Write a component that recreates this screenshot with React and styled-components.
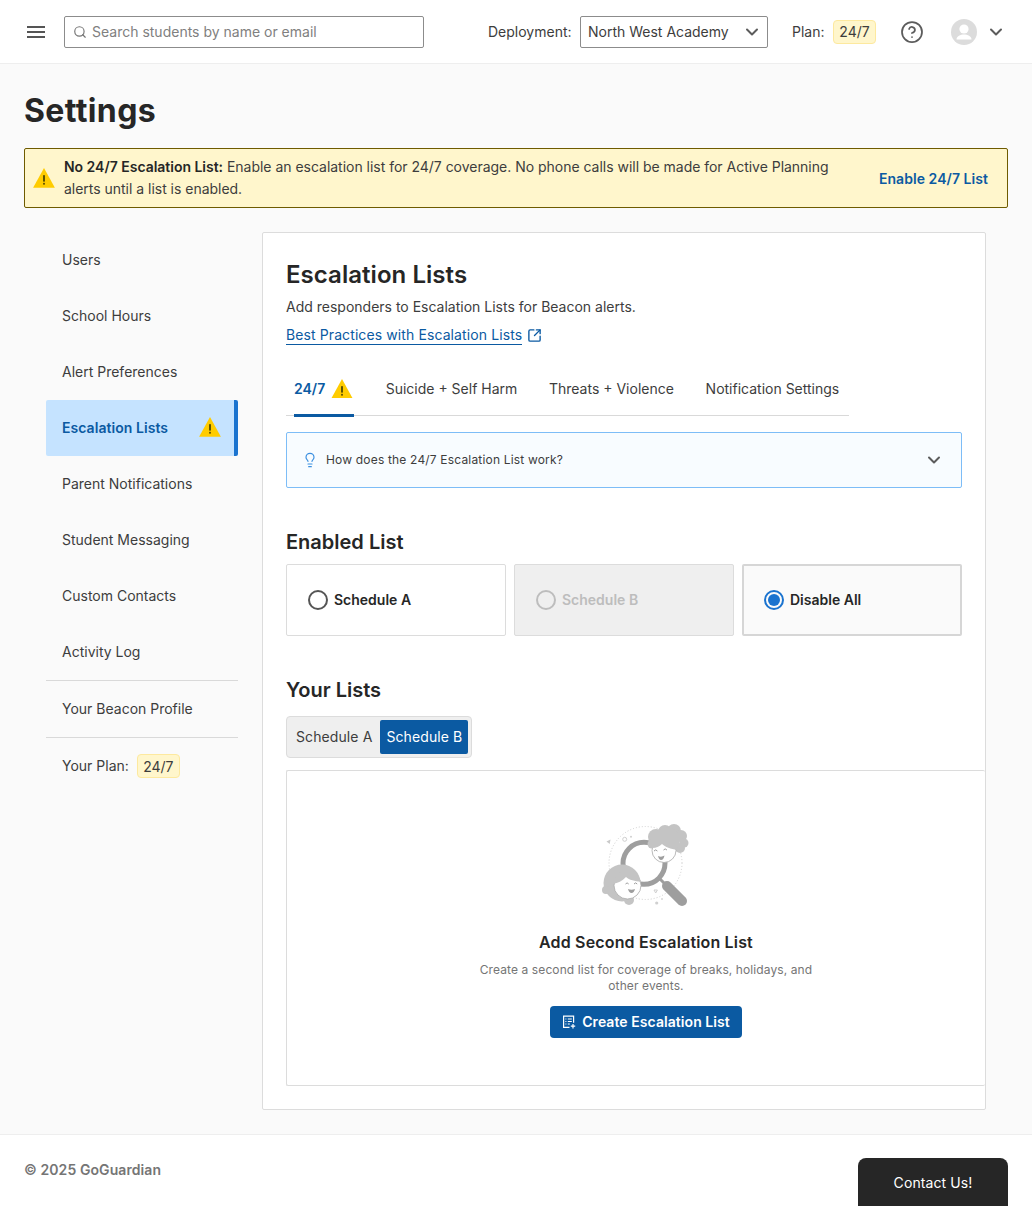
import React from "react";
import styled, { createGlobalStyle } from "styled-components";
import { ChevronDown, CircleHelp, Lightbulb, Search, SquareArrowOutUpRight } from "lucide-react";

const Global = createGlobalStyle`
  html, body { margin: 0; padding: 0; background: #fafafa; }
  * { box-sizing: border-box; }
  body { font-family: Inter, "Noto Sans", sans-serif; color: #262626; font-size: 14px; letter-spacing: 0; }
`;

const Page = styled.div`
  width: 1032px;
  height: 1206px;
  display: flex;
  flex-direction: column;
  overflow: hidden;
`;

const Header = styled.header`
  height: 64px;
  flex: none;
  background: #fff;
  border-bottom: 1px solid #eeeeee;
  display: flex;
  align-items: center;
  padding: 0 24px 0 27px;
`;
const MenuButton = styled.div`
  width: 18px;
  height: 12px;
  margin-right: 19px;
  display: flex;
  color: #555;
`;
const SearchBox = styled.div`
  width: 360px;
  height: 32px;
  flex: none;
  border: 1px solid #8c8c8c;
  border-radius: 2px;
  background: #fff;
  display: flex;
  align-items: center;
  gap: 5px;
  padding-left: 8px;
  color: #808080;
  margin-right: 64px;
`;
const Label = styled.span`
  width: ${(p) => p.$width}px;
  flex: none;
  color: #3d3d3d;
  white-space: nowrap;
`;
const DeploySelect = styled.div`
  width: 188px;
  height: 32px;
  flex: none;
  margin-left: 8px;
  margin-right: 24px;
  border: 1px solid #8c8c8c;
  border-radius: 2px;
  background: #fff;
  display: flex;
  align-items: center;
  justify-content: space-between;
  padding: 0 5px 0 7px;
  color: #3d3d3d;
`;
const Badge = styled.span`
  display: inline-flex;
  align-items: center;
  justify-content: center;
  width: 43px;
  height: 24px;
  flex: none;
  margin-left: 8px;
  background: #fff6cc;
  border: 1px solid #fde99f;
  border-radius: 4px;
  color: #3d3d3d;
  font-weight: 400;
`;
const NavBadge = styled(Badge)`
  margin-top: 2px;
`;
const HelpSlot = styled.div`
  display: flex;
  color: #5c5c5c;
  margin-left: 24px;
  margin-right: 27px;
`;
const AvatarSlot = styled.div`
  display: flex;
  align-items: center;
  gap: 9px;
  color: #5c5c5c;
`;

const Main = styled.main`
  flex: 1;
  display: flex;
  flex-direction: column;
  padding: 0 24px;
`;
const Title = styled.h1`
  margin: 26px 0 0;
  font-size: 32px;
  line-height: 42px;
  font-weight: 700;
  letter-spacing: 0.37px;
  color: #262626;
`;
const Banner = styled.div`
  margin-top: 16px;
  height: 60px;
  width: 984px;
  flex: none;
  background: #fff6cc;
  border: 1px solid #6e5b00;
  border-radius: 2px;
  display: flex;
  align-items: center;
  padding: 0 19px 0 8px;
`;
const BannerText = styled.div`
  margin-left: 9px;
  line-height: 22px;
  color: #3d3d3d;
  width: 785px;
  letter-spacing: -0.02px;
  b { font-weight: 600; color: #262626; }
`;
const BannerAction = styled.a`
  margin-left: auto;
  color: #0b5aa2;
  font-weight: 600;
  letter-spacing: 0.05px;
`;
const Columns = styled.div`
  display: flex;
  margin-top: 24px;
  padding-left: 22px;
`;
const Sidebar = styled.nav`
  width: 192px;
  flex: none;
  margin-right: 24px;
  display: flex;
  flex-direction: column;
`;
const NavItem = styled.div`
  height: 56px;
  display: flex;
  align-items: center;
  justify-content: space-between;
  padding: 0 13px 2px 16px;
  color: ${(p) => (p.$active ? "#0b5aa2" : "#3d3d3d")};
  font-weight: ${(p) => (p.$active ? 600 : 400)};
  letter-spacing: ${(p) => (p.$active ? "0.05px" : "0")};
  background: ${(p) => (p.$active ? "#c5e3ff" : "transparent")};
  border-right: ${(p) => (p.$active ? "4px solid #1a73cf" : "none")};
  border-radius: ${(p) => (p.$active ? "2px" : "0")};
`;
const NavDivided = styled(NavItem)`
  height: 57px;
  border-top: 1px solid #d9d9d9;
  justify-content: flex-start;
`;
const Card = styled.section`
  width: 724px;
  height: 878px;
  background: #fff;
  border: 1px solid #dcdcdc;
  border-radius: 2px;
  padding: 24px 23px 0;
  display: flex;
  flex-direction: column;
`;
const CardTitle = styled.h2`
  margin: 0;
  font-size: 24px;
  line-height: 36px;
  font-weight: 600;
  letter-spacing: 0.05px;
  color: #262626;
`;
const Desc = styled.p`
  margin: 3px 0 0;
  line-height: 22px;
  color: #3d3d3d;
`;
const BestLink = styled.a`
  margin-top: 6px;
  height: 22px;
  display: flex;
  align-items: center;
  gap: 5px;
  color: #0b5aa2;
  letter-spacing: 0.1px;
  span {
    border-bottom: 1px solid #0b5aa2;
    line-height: 18px;
  }
`;
const Tabs = styled.div`
  margin-top: 18px;
  width: 563px;
  height: 52px;
  flex: none;
  border-bottom: 1px solid #d9d9d9;
  display: flex;
  gap: 31.7px;
  padding: 0 8px;
`;
const Tab = styled.div`
  height: 53px;
  min-width: ${(p) => (p.$active ? "60px" : "0")};
  display: flex;
  align-items: center;
  gap: 6px;
  padding-bottom: 1px;
  color: ${(p) => (p.$active ? "#0b5aa2" : "#3d3d3d")};
  font-weight: ${(p) => (p.$active ? 600 : 400)};
  border-bottom: 3px solid ${(p) => (p.$active ? "#0b5aa2" : "transparent")};
  white-space: nowrap;
`;
const Accordion = styled.div`
  margin-top: 16px;
  height: 56px;
  flex: none;
  border: 1px solid #7dbdf7;
  border-radius: 2px;
  background: #f8fcff;
  display: flex;
  align-items: center;
  padding: 0 17px 0 15px;
  color: #3d3d3d;
  font-size: 12px;
  letter-spacing: 0.18px;
  gap: 8px;
  svg:first-child { color: #3b8fe0; }
  svg:last-child { margin-left: auto; color: #5c5c5c; }
`;
const AccordionLabel = styled.span`
  padding-bottom: 2px;
`;
const SectionTitle = styled.h3`
  margin: 40px 0 0;
  font-size: 20px;
  line-height: 28px;
  font-weight: 600;
  letter-spacing: 0;
  color: #262626;
`;
const RadioRow = styled.div`
  margin-top: 8px;
  display: flex;
  gap: 8px;
`;
const RadioCard = styled.div`
  width: 220px;
  height: 72px;
  display: flex;
  align-items: center;
  gap: 6px;
  padding: 0 0 1px ${(p) => (p.$selected ? "20px" : "21px")};
  border: ${(p) => (p.$selected ? "2px solid #d6d6d6" : "1px solid #dcdcdc")};
  border-radius: 2px;
  background: ${(p) => (p.$disabled ? "#efefef" : p.$selected ? "#fafafa" : "#fff")};
  color: ${(p) => (p.$disabled ? "#bdbdbd" : "#262626")};
  font-weight: 600;
`;
const RadioDot = styled.span`
  width: 20px;
  height: 20px;
  flex: none;
  border-radius: 50%;
  border: 2px solid ${(p) => (p.$disabled ? "#bdbdbd" : p.$selected ? "#1a73cf" : "#555")};
  display: flex;
  align-items: center;
  justify-content: center;
  &::after {
    content: "";
    display: ${(p) => (p.$selected ? "block" : "none")};
    width: 12px;
    height: 12px;
    border-radius: 50%;
    background: #1a73cf;
  }
`;
const Segmented = styled.div`
  margin-top: 12px;
  width: 186px;
  height: 42px;
  flex: none;
  display: flex;
  gap: 2px;
  padding: 3px;
  background: #efefef;
  border: 1px solid #dcdcdc;
  border-radius: 4px;
`;
const Segment = styled.div`
  padding: 0 6px 1px;
  display: flex;
  align-items: center;
  border-radius: 2px;
  white-space: nowrap;
  letter-spacing: 0.1px;
  color: ${(p) => (p.$active ? "#fff" : "#3d3d3d")};
  background: ${(p) => (p.$active ? "#0b5aa2" : "transparent")};
`;
const EmptyBox = styled.div`
  margin-top: 12px;
  margin-right: -23px;
  height: 316px;
  flex: none;
  border: 1px solid #dcdcdc;
  border-right: none;
  border-radius: 2px;
  display: flex;
  flex-direction: column;
  align-items: center;
  padding: 53px 0 0 20px;
`;
const EmptyTitle = styled.h4`
  margin: 22px 0 0;
  font-size: 16px;
  line-height: 24px;
  font-weight: 600;
  letter-spacing: 0.16px;
  color: #262626;
`;
const EmptyText = styled.p`
  margin: 8px 0 0;
  width: 350px;
  text-align: center;
  font-size: 12px;
  line-height: 16px;
  letter-spacing: 0.1px;
  color: #757575;
`;
const PrimaryButton = styled.button`
  margin-top: 12px;
  width: 192px;
  height: 32px;
  padding: 0 0 1px;
  border: none;
  border-radius: 4px;
  background: #0b5aa2;
  color: #fff;
  font: 600 14px Inter, sans-serif;
  letter-spacing: 0.06px;
  display: flex;
  align-items: center;
  justify-content: center;
  gap: 6px;
`;
const Footer = styled.footer`
  height: 72px;
  flex: none;
  background: #fff;
  border-top: 1px solid #eeeeee;
  display: flex;
  justify-content: space-between;
  padding: 23px 24px 0;
`;
const Copyright = styled.span`
  margin-top: 1px;
  font-weight: 600;
  color: #757575;
  line-height: 22px;
  letter-spacing: 0.08px;
`;
const ContactButton = styled.div`
  width: 150px;
  height: 48px;
  background: #262626;
  color: #fff;
  border-radius: 8px 8px 0 0;
  display: flex;
  align-items: center;
  justify-content: center;
  letter-spacing: 0.1px;
`;

const WarnIcon = ({ size = 22 }) => (
  <svg width={size} height={size * 0.9} viewBox="0 0 22 20">
    <path d="M11 0 L22 20 L0 20 Z" fill="#ffcc00" />
    <rect x="10" y="7" width="2" height="7" rx="0.8" fill="#5e5200" />
    <rect x="10" y="15" width="2" height="2" rx="0.8" fill="#5e5200" />
  </svg>
);

const MenuIcon = () => (
  <svg width="18" height="12" viewBox="0 0 18 12" fill="currentColor">
    <rect y="0" width="18" height="2" />
    <rect y="5" width="18" height="2" />
    <rect y="10" width="18" height="2" />
  </svg>
);

const AvatarIcon = () => (
  <svg width="26" height="26" viewBox="0 0 26 26">
    <circle cx="13" cy="13" r="13" fill="#dcdcdc" />
    <circle cx="13" cy="10" r="4.6" fill="#fff" />
    <path d="M5.5 20.5c0-3.2 4-5 7.500-5s7.500 1.800 7.500 5z" fill="#fff" />
  </svg>
);

const ListPlusIcon = () => (
  <svg width="14" height="14" viewBox="0 0 14 14" fill="none" stroke="#fff" strokeWidth="1.2">
    <path d="M7.500 12.400H1.600V1.200h10v6.500" />
    <path d="M3.400 4h1M3.400 6.500h1M3.400 9h1M5.800 4h4M5.800 6.500h4M5.800 9h2" />
    <path d="M11 9v4.400M8.800 11.200h4.400" />
  </svg>
);

const Illustration = () => (
  <svg width="90" height="84" viewBox="0 0 90 84">
    <circle cx="44.500" cy="39" r="36.500" fill="none" stroke="#d0d0d0" strokeWidth="1" strokeDasharray="1 2" />
    <path d="M5.500 17.500l4-2-.8 4.400z" fill="#c9c9c9" />
    <circle cx="23.700" cy="15.300" r="2" fill="none" stroke="#d0d0d0" />
    <circle cx="30" cy="12.700" r="1" fill="#d0d0d0" />
    <circle cx="55.700" cy="79" r="1.600" fill="#d0d0d0" />
    <circle cx="61" cy="75" r="1" fill="#d8d8d8" />
    <path d="M53 66l3.400 0-1.700 3z" fill="none" stroke="#d0d0d0" />
    <circle cx="43" cy="39.300" r="21" fill="none" stroke="#9e9e9e" strokeWidth="5" />
    <path d="M59 55l5 5" stroke="#9e9e9e" strokeWidth="3" />
    <path d="M66 62l15 15" stroke="#9e9e9e" strokeWidth="10" strokeLinecap="round" />
    <g fill="#c4c4c4">
      <circle cx="55" cy="13" r="8" />
      <circle cx="64" cy="8" r="7" />
      <circle cx="73" cy="7" r="7" />
      <circle cx="80" cy="12" r="6" />
      <circle cx="83" cy="19" r="4.500" />
      <circle cx="79" cy="24" r="5" />
      <circle cx="51" cy="20" r="4.500" />
      <circle cx="66" cy="16" r="13" />
    </g>
    <circle cx="63" cy="26.500" r="12" fill="#fff" stroke="#a8a8a8" strokeWidth="0.8" />
    <path d="M50 24c4 .5 8-1 11-4 3 3 9 5 15 6l3-14H50z" fill="#c4c4c4" />
    <path d="M53 27q1.700-2.200 3.400 0M62.500 26q1.700-2.200 3.400 0" fill="none" stroke="#9e9e9e" />
    <path d="M57 32q3.500 1.500 6.500-.5-1 4.500-3.500 4.500-2 0-3-4z" fill="#9e9e9e" />
    <g fill="#c4c4c4">
      <circle cx="21" cy="59" r="18.500" />
      <circle cx="5" cy="66" r="4" />
      <circle cx="28" cy="76" r="5" />
    </g>
    <circle cx="26.500" cy="61.500" r="13.500" fill="#fff" stroke="#a8a8a8" strokeWidth="0.8" />
    <path d="M12 60c5-1 9-3 13-7 3 3 9 4 15 5-2-8-8-13-16-12-5 1-11 6-12 14z" fill="#c4c4c4" />
    <path d="M24.500 60q1.600-2.200 3.200 0M33 60q1.600-2.200 3.200 0" fill="none" stroke="#9e9e9e" />
    <path d="M27 65q3.500 1.500 7 0-1 4-3.500 4-2.500 0-3.500-4z" fill="#9e9e9e" />
  </svg>
);

const navItems = [
  { label: "Users" },
  { label: "School Hours" },
  { label: "Alert Preferences" },
  { label: "Escalation Lists", active: true },
  { label: "Parent Notifications" },
  { label: "Student Messaging" },
  { label: "Custom Contacts" },
  { label: "Activity Log" },
];

const tabs = ["Suicide + Self Harm", "Threats + Violence", "Notification Settings"];

const Chevron = () => <ChevronDown size={20} strokeWidth={2.4} />;

export default function App() {
  return (
    <Page>
      <Global />
      <Header>
        <MenuButton><MenuIcon /></MenuButton>
        <SearchBox>
          <Search size={14} strokeWidth={2} color="#757575" />
          Search students by name or email
        </SearchBox>
        <Label $width={84}>Deployment:</Label>
        <DeploySelect>
          North West Academy
          <ChevronDown size={20} strokeWidth={2.4} color="#5c5c5c" />
        </DeploySelect>
        <Label $width={33}>Plan:</Label>
        <Badge>24/7</Badge>
        <HelpSlot><CircleHelp size={24} strokeWidth={1.75} /></HelpSlot>
        <AvatarSlot>
          <AvatarIcon />
          <Chevron />
        </AvatarSlot>
      </Header>
      <Main>
        <Title>Settings</Title>
        <Banner>
          <WarnIcon />
          <BannerText>
            <b>No 24/7 Escalation List:</b> Enable an escalation list for 24/7 coverage. No phone calls will be made for Active Planning alerts until a list is enabled.
          </BannerText>
          <BannerAction>Enable 24/7 List</BannerAction>
        </Banner>
        <Columns>
          <Sidebar>
            {navItems.map((n) => (
              <NavItem key={n.label} $active={n.active}>
                {n.label}
                {n.active && <WarnIcon />}
              </NavItem>
            ))}
            <NavDivided>Your Beacon Profile</NavDivided>
            <NavDivided>Your Plan:<NavBadge>24/7</NavBadge></NavDivided>
          </Sidebar>
          <Card>
            <CardTitle>Escalation Lists</CardTitle>
            <Desc>Add responders to Escalation Lists for Beacon alerts.</Desc>
            <BestLink>
              <span>Best Practices with Escalation Lists</span>
              <SquareArrowOutUpRight size={15} strokeWidth={2.2} />
            </BestLink>
            <Tabs>
              <Tab $active>24/7 <WarnIcon /></Tab>
              {tabs.map((t) => <Tab key={t}>{t}</Tab>)}
            </Tabs>
            <Accordion>
              <Lightbulb size={16} strokeWidth={1.75} />
              <AccordionLabel>How does the 24/7 Escalation List work?</AccordionLabel>
              <Chevron />
            </Accordion>
            <SectionTitle>Enabled List</SectionTitle>
            <RadioRow>
              <RadioCard><RadioDot />Schedule A</RadioCard>
              <RadioCard $disabled><RadioDot $disabled />Schedule B</RadioCard>
              <RadioCard $selected><RadioDot $selected />Disable All</RadioCard>
            </RadioRow>
            <SectionTitle>Your Lists</SectionTitle>
            <Segmented>
              <Segment>Schedule A</Segment>
              <Segment $active>Schedule B</Segment>
            </Segmented>
            <EmptyBox>
              <Illustration />
              <EmptyTitle>Add Second Escalation List</EmptyTitle>
              <EmptyText>Create a second list for coverage of breaks, holidays, and other events.</EmptyText>
              <PrimaryButton><ListPlusIcon />Create Escalation List</PrimaryButton>
            </EmptyBox>
          </Card>
        </Columns>
      </Main>
      <Footer>
        <Copyright>© 2025 GoGuardian</Copyright>
        <ContactButton>Contact Us!</ContactButton>
      </Footer>
    </Page>
  );
}
